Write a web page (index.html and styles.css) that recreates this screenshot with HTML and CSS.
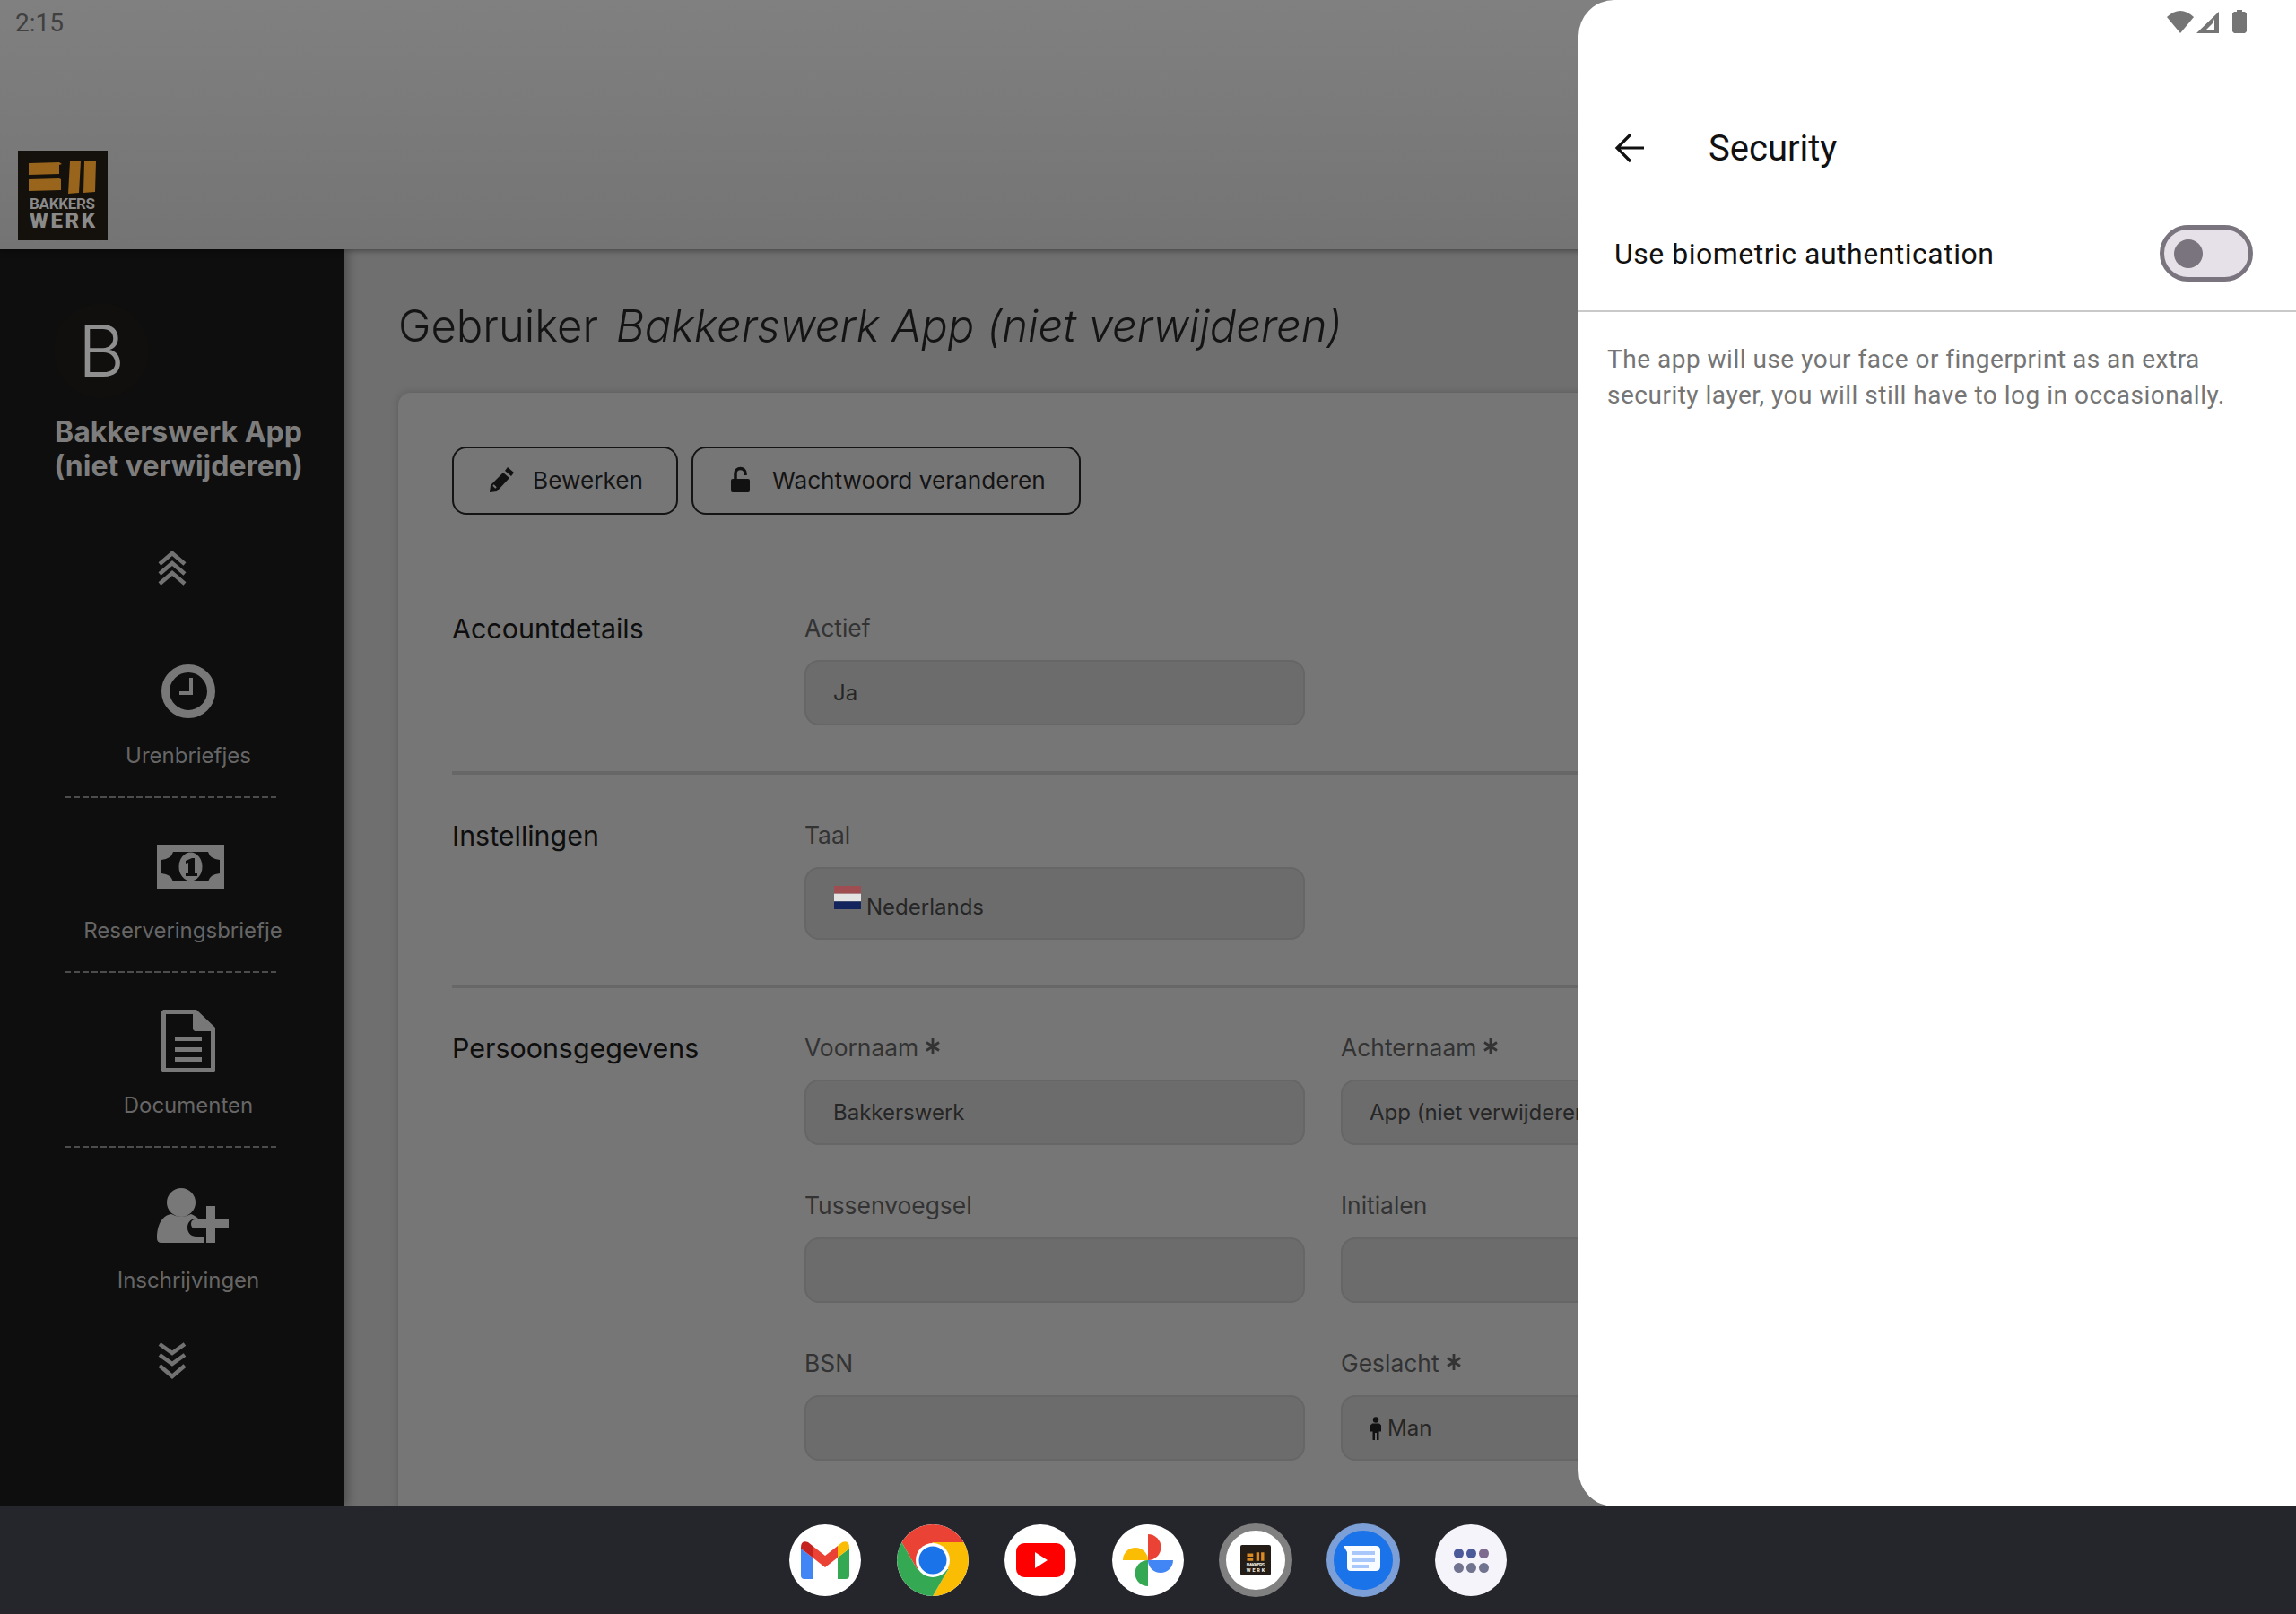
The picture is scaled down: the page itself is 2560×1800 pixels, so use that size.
FILE: index.html
```html
<!DOCTYPE html>
<html lang="nl">
<head>
<meta charset="utf-8">
<title>Security</title>
<link rel="stylesheet" href="styles.css">
</head>
<body>
<div class="app">
  <div class="stage">
    <header class="topbar">
      <span class="clock">2:15</span>
      <svg class="logo" viewBox="0 0 100 100">
        <rect width="100" height="100" fill="#14100c"/>
        <path d="M12 14l34 -1 3 2 -3 1 0 10 -34 1zM12 32l34 -1 2 1 0 12 -36 1z" fill="#99651c"/>
        <path d="M58 12l12 0 -2 35 -12 1zM74 12l13 0 -1 34 -13 1z" fill="#99651c"/>
        <text x="13" y="65" class="logo-small" textLength="73">BAKKERS</text>
        <text x="13" y="86" class="logo-big" textLength="73">WERK</text>
      </svg>
    </header>
    <div class="body">
      <nav class="sidebar">
        <div class="avatar">B</div>
        <div class="user-name">Bakkerswerk App<br>(niet verwijderen)</div>
        <svg class="chevrons chevrons-up" viewBox="0 0 32 42"><path d="M2 17L16 5l14 12M2 28L16 16l14 12M2 39L16 27l14 12" fill="none" stroke="#727272" stroke-width="4.5"/></svg>
        <a class="nav-item">
          <span class="nav-icon">
            <svg width="60" height="60" viewBox="0 0 60 60"><circle cx="30" cy="30" r="25.500" fill="none" stroke="#787878" stroke-width="9"/><path d="M33 15v17H20" fill="none" stroke="#787878" stroke-width="4"/></svg>
          </span>
          <span class="nav-label">Urenbriefjes</span>
          <span class="nav-dash"></span>
        </a>
        <a class="nav-item">
          <span class="nav-icon nav-icon-money">
            <svg width="75" height="49" viewBox="0 0 75 49"><path fill-rule="evenodd" d="M0 0h75v49H0zM18 8q-2 8-13 9v15q11 1 13 9h39q2-8 13-9V17q-11-1-13-9z" fill="#787878"/><ellipse cx="37.500" cy="24.500" rx="13" ry="16" fill="#787878"/><path d="M32 18l7-3h3v17h3v3H32v-3h3V21l-3 1z" fill="#0e0e0e"/></svg>
          </span>
          <span class="nav-label nav-label-wide">Reserveringsbriefje</span>
          <span class="nav-dash"></span>
        </a>
        <a class="nav-item">
          <span class="nav-icon">
            <svg width="60" height="70" viewBox="0 0 60 70"><path fill-rule="evenodd" d="M2 0h37l21 20v48l-2 2H2l-2-2V2zM5 5v60h50V24H37l-2-2V5z" fill="#787878"/><path d="M40 6v13h15z" fill="#787878"/><path d="M15 30h30v5H15zM15 42h30v5H15zM15 53h30v5H15z" fill="#787878"/></svg>
          </span>
          <span class="nav-label">Documenten</span>
          <span class="nav-dash"></span>
        </a>
        <a class="nav-item">
          <span class="nav-icon nav-icon-user">
            <svg width="80" height="62" viewBox="0 0 80 62"><circle cx="27" cy="16" r="16" fill="#787878"/><path d="M0 56C0 38 8 30 16 29q11 6 22 0c3 1 6 3 8 5h-2c-6 0-10 4-10 10s4 10 10 10h8v7H5q-5 0-5-5z" fill="#787878"/><path d="M55 20h10v15h15v10H65v16H55V45H43q-5 0-5-5t5-5h12z" fill="#787878"/></svg>
          </span>
          <span class="nav-label">Inschrijvingen</span>
        </a>
        <svg class="chevrons chevrons-down" viewBox="0 0 32 44"><path d="M2 4l14 10L30 4M2 16l14 10L30 16M2 28l14 12L30 28" fill="none" stroke="#727272" stroke-width="4.500"/></svg>
      </nav>
      <main class="content">
        <h1 class="title">Gebruiker <em>Bakkerswerk App (niet verwijderen)</em></h1>
        <section class="card">
          <div class="actions">
            <button class="btn">
              <svg width="30" height="30" viewBox="0 0 30 30"><path d="M22 1l7 6-3 4-7-6zM17 7l7 6L10 28l-8 1 1-8z" fill="#111"/><path d="M6 21l3 3" stroke="#777" stroke-width="2"/></svg>
              Bewerken
            </button>
            <button class="btn">
              <svg width="30" height="30" viewBox="0 0 30 30"><path d="M9 15V8a5.500 5.500 0 0 1 11 0v2" fill="none" stroke="#111" stroke-width="3.500"/><rect x="4" y="14" width="21" height="15" rx="2" fill="#111"/></svg>
              Wachtwoord veranderen
            </button>
          </div>
          <div class="section section-first">
            <h2 class="section-title">Accountdetails</h2>
            <div class="fields">
              <div class="field">
                <label class="field-label">Actief</label>
                <div class="input">Ja</div>
              </div>
            </div>
          </div>
          <div class="section">
            <h2 class="section-title">Instellingen</h2>
            <div class="fields">
              <div class="field">
                <label class="field-label">Taal</label>
                <div class="input input-tall">
                  <svg class="flag" width="30" height="26" viewBox="0 0 30 24" preserveAspectRatio="none"><rect width="30" height="8" fill="#9f4d50"/><rect y="8" width="30" height="8" fill="#e3e3e3"/><rect y="16" width="30" height="8" fill="#14245c"/></svg>
                  <span class="flag-text">Nederlands</span>
                </div>
              </div>
            </div>
          </div>
          <div class="section section-last">
            <h2 class="section-title">Persoonsgegevens</h2>
            <div class="fields">
              <div class="field">
                <label class="field-label">Voornaam <svg class="req" viewBox="0 0 16 20"><path d="M8 1v18M1 5.500l14 9M15 5.500l-14 9" stroke="#333" stroke-width="2.800"/></svg></label>
                <div class="input">Bakkerswerk</div>
              </div>
              <div class="field">
                <label class="field-label">Achternaam <svg class="req" viewBox="0 0 16 20"><path d="M8 1v18M1 5.500l14 9M15 5.500l-14 9" stroke="#333" stroke-width="2.800"/></svg></label>
                <div class="input">App (niet verwijderen)</div>
              </div>
              <div class="field">
                <label class="field-label">Tussenvoegsel</label>
                <div class="input"></div>
              </div>
              <div class="field">
                <label class="field-label">Initialen</label>
                <div class="input"></div>
              </div>
              <div class="field">
                <label class="field-label">BSN</label>
                <div class="input"></div>
              </div>
              <div class="field">
                <label class="field-label">Geslacht <svg class="req" viewBox="0 0 16 20"><path d="M8 1v18M1 5.500l14 9M15 5.500l-14 9" stroke="#333" stroke-width="2.800"/></svg></label>
                <div class="input">
                  <svg class="man" width="14" height="26" viewBox="0 0 14 26"><circle cx="7" cy="3.500" r="3.200" fill="#111"/><path d="M3 7.500h8l2 2v7h-2.500V26H8v-8H6v8H3.500V16.500H1v-7z" fill="#111"/></svg>
                  Man
                </div>
              </div>
            </div>
          </div>
        </section>
      </main>
    </div>
    <aside class="panel">
      <div class="status-icons">
        <svg width="30" height="26" viewBox="0 0 30 26"><path d="M0 8Q15-6 30 8L15 26z" fill="#757575"/></svg>
        <svg width="26" height="24" viewBox="0 0 26 24"><path d="M25 0v24H0zM20 11L11 20h9z" fill="#757575"/><path d="M20 8v13h-5z" fill="#fff"/></svg>
        <svg class="battery" width="16" height="26" viewBox="0 0 16 26"><path d="M5 0h6v2h3l2 2v20l-2 2H2l-2-2V4l2-2h3z" fill="#757575"/></svg>
      </div>
      <div class="panel-head">
        <svg class="back" width="34" height="34" viewBox="0 0 34 34"><path d="M33 17H4M18 2L3 17l15 15" fill="none" stroke="#111" stroke-width="3.200"/></svg>
        <h2 class="panel-title">Security</h2>
      </div>
      <div class="setting">
        <span class="setting-name">Use biometric authentication</span>
        <span class="switch"><span class="knob"></span></span>
      </div>
      <p class="setting-help">The app will use your face or fingerprint as an extra security layer, you will still have to log in occasionally.</p>
    </aside>
  </div>
  <footer class="dock">
    <span class="app-icon">
      <svg width="54" height="42" viewBox="0 0 54 42"><path d="M0 8v30q0 4 4 4h9V18L0 8z" fill="#4285f4"/><path d="M41 18v24h9q4 0 4-4V8L41 18z" fill="#34a853"/><path d="M13 5l14 11L41 5v13L27 29 13 18z" fill="#ea4335"/><path d="M41 5l5-4q8-3 8 6v1L41 18z" fill="#fbbc04"/><path d="M13 5L8 1Q0-2 0 7v1l13 10z" fill="#c5221f"/></svg>
    </span>
    <span class="app-icon">
      <svg width="80" height="80" viewBox="0 0 80 80"><path d="M5.360 20A40 40 0 0 1 74.640 20H40L22.680 50Z" fill="#ea4335"/><path d="M74.640 20A40 40 0 0 1 40 80L57.320 50L40 20Z" fill="#fbbc04"/><path d="M40 80A40 40 0 0 1 5.360 20L22.680 50H57.320Z" fill="#34a853"/><circle cx="40" cy="40" r="19" fill="#fff"/><circle cx="40" cy="40" r="15.500" fill="#1a73e8"/></svg>
    </span>
    <span class="app-icon">
      <svg width="54" height="38" viewBox="0 0 54 38"><rect width="54" height="38" rx="9" fill="#f00"/><path d="M21 10l14 9-14 9z" fill="#fff"/></svg>
    </span>
    <span class="app-icon">
      <svg width="80" height="80" viewBox="0 0 80 80"><path d="M12 40A14 14 0 0 1 40 40Z" fill="#fbbc04"/><path d="M40 11A14.500 14.500 0 0 1 40 40Z" fill="#ea4335"/><path d="M68 40A14 14 0 0 1 40 40Z" fill="#4285f4"/><path d="M40 69A14.500 14.500 0 0 1 40 40Z" fill="#34a853"/></svg>
    </span>
    <span class="app-icon app-icon-running">
      <svg width="34" height="34" viewBox="0 0 100 100"><rect width="100" height="100" rx="6" fill="#231c17"/><path d="M22 28h20v10H22zM22 42h20v10H22zM52 24h10v28H52zM68 24h10v28H68z" fill="#d98a22"/><text x="20" y="70" class="logo-small logo-light" textLength="60">BAKKERS</text><text x="20" y="88" class="logo-big logo-light" textLength="60">WERK</text></svg>
    </span>
    <span class="app-icon app-icon-running app-icon-messages">
      <svg width="44" height="34" viewBox="0 0 44 34"><path d="M0 1l36 0q5 0 5 5v18q0 5-5 5H8q-4 0-4-4V8z" fill="#f8fbff"/><path d="M9 7h26v4H9zM9 15h26v4H9zM9 22h19v4H9z" fill="#a8c7fa"/></svg>
    </span>
    <span class="app-icon app-icon-launcher">
      <span class="launcher-dot launcher-blue"></span><span class="launcher-dot launcher-blue"></span><span class="launcher-dot launcher-mauve"></span>
      <span class="launcher-dot launcher-slate"></span><span class="launcher-dot launcher-slate"></span><span class="launcher-dot launcher-slate"></span>
    </span>
  </footer>
</div>
</body>
</html>
```

FILE: styles.css
```css
* { box-sizing: border-box; }
html, body { margin: 0; padding: 0; }
body { width: 2560px; height: 1800px; overflow: hidden; font-family: "Inter", "Liberation Sans", sans-serif; background: #25262b; }
.app { display: flex; flex-direction: column; height: 1800px; }
.stage { position: relative; flex: 1; display: flex; flex-direction: column; overflow: hidden; }

.topbar { position: relative; z-index: 2; height: 278px; flex: none; padding: 11px 20px 10px; display: flex; flex-direction: column; justify-content: space-between; align-items: flex-start; background: linear-gradient(#808080, #747474); box-shadow: 0 2px 6px rgba(0,0,0,.35); }
.clock { font-family: "Roboto", sans-serif; font-size: 28px; line-height: 30px; color: #404040; margin-left: -3px; }
.logo { display: block; width: 100px; height: 100px; }
.logo-small { font-family: "Roboto", sans-serif; font-size: 17px; font-weight: 700; fill: #8a8a8a; }
.logo-big { font-family: "Roboto", sans-serif; font-size: 24px; font-weight: 900; fill: #8a8a8a; }
.logo-light { fill: #e8e4df; font-size: 16px; }

.body { flex: 1; display: flex; min-height: 0; }
.sidebar { position: relative; z-index: 1; width: 384px; flex: none; display: flex; flex-direction: column; background: #0e0e0e; box-shadow: 4px 0 10px rgba(0,0,0,.3); color: #787878; }
.avatar { display: flex; align-items: center; justify-content: center; margin: 60px 0 0 60px; width: 106px; height: 106px; border-radius: 50%; background: #110f0d; font-size: 80px; line-height: 96px; font-weight: 300; color: #8f8f8f; }
.user-name { margin-top: 19px; width: 398px; font-size: 32px; line-height: 38px; font-weight: 700; color: #7d7d7d; text-align: center; white-space: nowrap; }
.chevrons { display: block; width: 32px; height: 42px; margin-left: 176px; }
.chevrons-up { margin-top: 73px; }
.chevrons-down { margin-top: 51px; height: 44px; }
.nav-item { display: flex; flex-direction: column; align-items: center; margin-left: 72px; width: 276px; }
.chevrons-up + .nav-item { margin-top: 77px; }
.nav-icon { height: 80px; display: flex; align-items: center; justify-content: center; }
.nav-icon-money { margin-left: 5px; }
.nav-icon-user { margin-left: 10px; }
.nav-label { font-size: 24px; line-height: 32px; color: #666; white-space: nowrap; margin-top: 16px; }
.nav-label-wide { margin-right: 12px; }
.nav-dash { align-self: flex-start; width: 236px; height: 2px; margin: 29px 0 36px; background: repeating-linear-gradient(90deg, #4c4c4c 0 7px, transparent 7px 10px); }

.content { flex: 1; min-width: 0; min-height: 0; overflow: hidden; padding: 0 60px; background: #6f6f6f; }
.title { margin: 49px 0 0; font-size: 49px; line-height: 74px; font-weight: 300; color: #141414; white-space: nowrap; word-spacing: 6px; height: 111px; }
.title em { font-weight: 300; word-spacing: 0; }
.card { padding: 60px 60px 0; height: 1300px; background: #767676; border-radius: 14px 14px 0 0; box-shadow: 0 0 8px rgba(0,0,0,.18); }
.actions { display: flex; gap: 15px; }
.btn { display: flex; align-items: center; gap: 20px; height: 76px; padding: 0 37px 2px 38px; border: 2px solid #141414; border-radius: 16px; background: transparent; font-family: inherit; font-size: 26.200px; color: #141414; }
.section { display: grid; grid-template-columns: 394px 1fr; padding: 48px 0 50px; border-bottom: 4px solid #676767; }
.section-first { padding: 107px 0 51px; }
.section-last { padding-top: 47px; border-bottom: 0; }
.section-title { margin: 1px 0 0; font-size: 30.400px; line-height: 38px; font-weight: 400; color: #0e0e0e; }
.fields { display: grid; grid-template-columns: repeat(2, 557px); column-gap: 41px; row-gap: 48px; }
.field { display: flex; flex-direction: column; }
.field-label { display: flex; align-items: center; gap: 8px; height: 36px; margin: 1px 0 18px -1px; font-size: 26.400px; line-height: 36px; color: #333; white-space: nowrap; }
.req { width: 16px; height: 20px; margin-top: -2px; }
.input { display: flex; align-items: center; gap: 6px; height: 73px; margin-left: -1px; padding: 0 30px; border: 2px solid #666; border-radius: 16px; background: #6c6c6c; font-size: 24px; color: #262626; white-space: nowrap; overflow: visible; }
.input-tall { height: 81px; }
.flag { margin-top: -14px; margin-left: 1px; }
.flag-text { margin-top: 8px; }
.man { margin-right: 0; }

.panel { position: absolute; z-index: 3; top: 0; right: 0; width: 800px; height: 1680px; background: #fff; border-radius: 40px 0 0 40px; font-family: "Roboto", sans-serif; }
.status-icons { display: flex; align-items: flex-start; padding: 11px 0 0 656px; height: 144px; }
.status-icons svg + svg { margin: 2px 0 0 3px; }
.status-icons .battery { margin: 0 0 0 14px; }
.panel-head { display: flex; align-items: center; gap: 71px; height: 44px; padding-left: 40px; }
.back { margin-top: -3px; }
.panel-title { margin: 0; font-size: 40px; line-height: 44px; font-weight: 400; color: #111; }
.setting { display: flex; align-items: center; justify-content: space-between; height: 160px; padding: 31px 48px 0 40px; border-bottom: 2px solid #c9c9c9; }
.setting-name { font-size: 32px; letter-spacing: .5px; color: #111; }
.switch { display: flex; align-items: center; width: 104px; height: 63px; padding-left: 11px; border: 5px solid #79747e; border-radius: 32px; background: #e6e0e9; }
.knob { width: 32px; height: 32px; border-radius: 50%; background: #79747e; }
.setting-help { margin: 33px 0 0 32px; width: 720px; font-size: 28px; line-height: 40px; letter-spacing: .5px; color: #757575; }

.dock { height: 120px; flex: none; display: flex; align-items: center; justify-content: center; gap: 40px; background: #25262b; }
.app-icon { width: 80px; height: 80px; border-radius: 50%; background: #fff; display: flex; align-items: center; justify-content: center; overflow: hidden; }
.app-icon-running { box-shadow: 0 0 0 1px #808080; border: 7px solid #808080; }
.app-icon-messages { background: #1a73e8; border-color: #7b9fd6; box-shadow: 0 0 0 1px #7b9fd6; }
.app-icon-launcher { background: #f6f4fb; display: grid; grid-template-columns: repeat(3, 11px); grid-auto-rows: 11px; gap: 5px 3px; align-content: center; justify-content: center; }
.launcher-dot { width: 11px; height: 11px; border-radius: 50%; }
.launcher-blue { background: #4b5a99; }
.launcher-mauve { background: #7f6a8f; }
.launcher-slate { background: #70748f; }
```
